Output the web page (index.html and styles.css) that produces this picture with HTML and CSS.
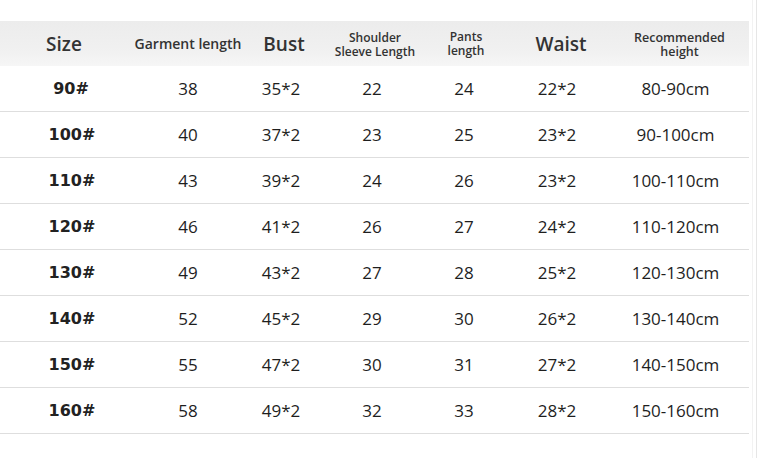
FILE: index.html
```html
<!DOCTYPE html>
<html>
<head>
<meta charset="utf-8">
<link rel="stylesheet" href="styles.css">
</head>
<body>
<div class="page">
  <div class="table">
    <div class="row head">
      <div class="cell h-size big">Size</div>
      <div class="cell mid">Garment length</div>
      <div class="cell h-bust big">Bust</div>
      <div class="cell h-sh small"><span>Shoulder</span><span>Sleeve Length</span></div>
      <div class="cell h-pants small"><span>Pants</span><span>length</span></div>
      <div class="cell h-waist big">Waist</div>
      <div class="cell h-rec small"><span>Recommended</span><span>height</span></div>
    </div>
    <div class="row"><div class="cell size s90">90#</div><div class="cell">38</div><div class="cell">35*2</div><div class="cell">22</div><div class="cell">24</div><div class="cell">22*2</div><div class="cell">80-90cm</div></div>
    <div class="row"><div class="cell size">100#</div><div class="cell">40</div><div class="cell">37*2</div><div class="cell">23</div><div class="cell">25</div><div class="cell">23*2</div><div class="cell">90-100cm</div></div>
    <div class="row"><div class="cell size">110#</div><div class="cell">43</div><div class="cell">39*2</div><div class="cell">24</div><div class="cell">26</div><div class="cell">23*2</div><div class="cell">100-110cm</div></div>
    <div class="row"><div class="cell size">120#</div><div class="cell">46</div><div class="cell">41*2</div><div class="cell">26</div><div class="cell">27</div><div class="cell">24*2</div><div class="cell">110-120cm</div></div>
    <div class="row"><div class="cell size">130#</div><div class="cell">49</div><div class="cell">43*2</div><div class="cell">27</div><div class="cell">28</div><div class="cell">25*2</div><div class="cell">120-130cm</div></div>
    <div class="row"><div class="cell size">140#</div><div class="cell">52</div><div class="cell">45*2</div><div class="cell">29</div><div class="cell">30</div><div class="cell">26*2</div><div class="cell">130-140cm</div></div>
    <div class="row"><div class="cell size">150#</div><div class="cell">55</div><div class="cell">47*2</div><div class="cell">30</div><div class="cell">31</div><div class="cell">27*2</div><div class="cell">140-150cm</div></div>
    <div class="row"><div class="cell size">160#</div><div class="cell">58</div><div class="cell">49*2</div><div class="cell">32</div><div class="cell">33</div><div class="cell">28*2</div><div class="cell">150-160cm</div></div>
  </div>
  <div class="edge edge1"></div>
  <div class="edge edge2"></div>
</div>
</body>
</html>
```

FILE: styles.css
```css
html, body {
  margin: 0;
  padding: 0;
  background: #ffffff;
}
.page {
  width: 759px;
  height: 458px;
  display: flex;
  align-items: stretch;
}
.table {
  width: 749px;
  padding-top: 21px;
  display: flex;
  flex-direction: column;
}
.row {
  display: grid;
  grid-template-columns: 142px 92px 94px 88px 96px 90px 147px;
  height: 45px;
  border-bottom: 1px solid #dedede;
  font-family: "Open Sans", "Noto Sans", sans-serif;
  font-size: 17px;
  color: #1e1e1e;
}
.row.head {
  height: 45px;
  border-bottom: none;
  background: linear-gradient(#ececec, #f1f1f1 70%, #f6f6f6);
  color: #333333;
  font-weight: 600;
}
.cell {
  display: flex;
  align-items: center;
  justify-content: center;
  text-align: center;
  white-space: nowrap;
}
.cell.size {
  font-family: "DejaVu Sans", Verdana, sans-serif;
  font-weight: bold;
  font-size: 16px;
  padding-left: 2px;
  color: #222222;
}
.cell.size.s90 {
  padding-left: 0;
}
.big {
  font-size: 19px;
}
.mid {
  font-size: 14px;
}
.small {
  flex-direction: column;
  font-size: 12px;
  line-height: 14px;
  padding-top: 2px;
}
.h-size { padding-right: 14px; }
.h-bust { padding-left: 6px; }
.h-sh { padding-left: 6px; }
.h-pants { padding-left: 4px; padding-top: 0; }
.h-waist { padding-left: 8px; }
.h-rec { font-size: 12.5px; padding-left: 8px; padding-top: 3px; }
.edge {
  width: 1px;
  height: 458px;
}
.edge1 {
  margin-left: 3px;
  background: #f2f2f2;
}
.edge2 {
  margin-left: 3px;
  background: #e6e6e6;
}
```
